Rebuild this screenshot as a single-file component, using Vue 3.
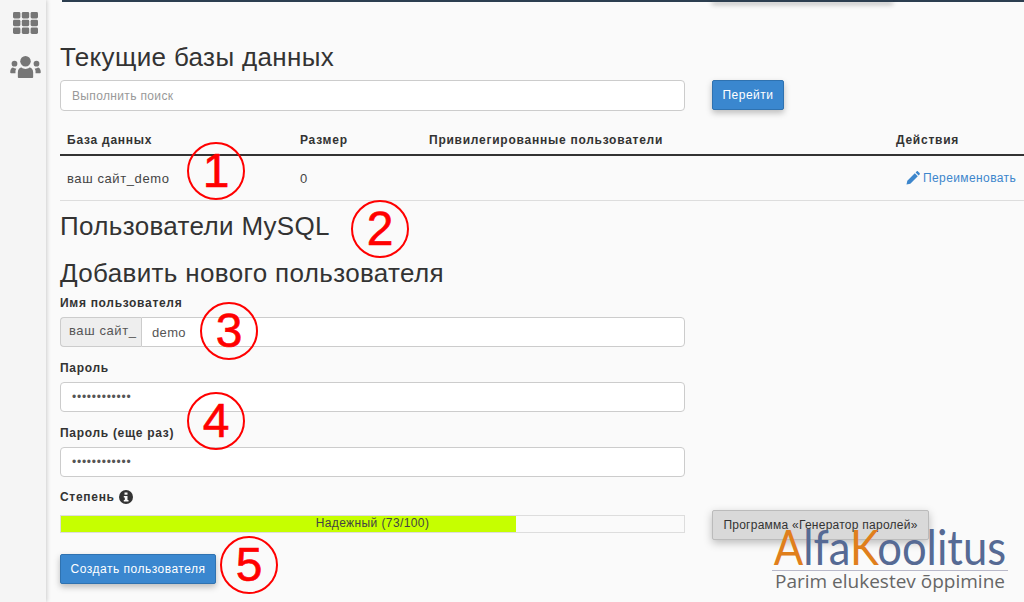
<template>
  <div class="page">
    <aside class="side">
      <svg class="ic-grid" width="26" height="24" viewBox="0 0 26 24">
        <g fill="#767676">
          <rect v-for="c in cells" :key="c.k" :x="c.x" :y="c.y" width="7.4" height="6.4" rx="1.4" />
        </g>
      </svg>
      <svg class="ic-users" width="31" height="22" viewBox="0 0 32 23">
        <g fill="#767676">
          <circle cx="16" cy="5.500" r="5.500" />
          <circle cx="4.500" cy="8" r="3" />
          <circle cx="27.500" cy="8" r="3" />
          <path d="M8 22v-5c0-3 2-5 4-5 1 1 2.500 1.500 4 1.500s3-.5 4-1.500c2 0 4 2 4 5v5c0 .8-.6 1-1 1H9c-.4 0-1-.2-1-1z" />
          <path d="M0 17c0-3 1.500-5 3-5 1 .8 2 1.200 3.500 1.200-.6.800-1 1.500-1 2.800v2H1c-.6 0-1-.4-1-1zM32 17c0-3-1.500-5-3-5-1 .8-2 1.200-3.500 1.200.6.800 1 1.500 1 2.800v2H31c.6 0 1-.4 1-1z" />
        </g>
      </svg>
    </aside>

    <main class="main">
      <div class="topbar"><div class="topshadow"></div></div>

      <h2 class="h-db">Текущие базы данных</h2>
      <div class="search-row">
        <input class="input" placeholder="Выполнить поиск" />
        <button class="btn primary go">Перейти</button>
      </div>

      <div class="table">
        <div class="tr head">
          <div class="c1">База данных</div>
          <div class="c2">Размер</div>
          <div class="c3">Привилегированные пользователи</div>
          <div class="c4">Действия</div>
        </div>
        <div class="tr body">
          <div class="c1">ваш сайт_demo</div>
          <div class="c2">0</div>
          <div class="c3"></div>
          <div class="c4 link">
            <svg width="14" height="14" viewBox="0 0 14 14"><path fill="#3d86cc" d="M0.500 13.500l.8-3.800 7.500-7.500 3 3-7.500 7.500zM9.600 1.400l1-1c.4-.4 1-.4 1.400 0l1.600 1.600c.4.400.4 1 0 1.400l-1 1z" /></svg>
            <span>Переименовать</span>
          </div>
        </div>
      </div>

      <h2 class="h-users">Пользователи MySQL</h2>
      <h2 class="h-add">Добавить нового пользователя</h2>

      <label class="lb first">Имя пользователя</label>
      <div class="input-group">
        <span class="addon">ваш сайт_</span>
        <input class="input grouped" value="demo" />
      </div>

      <label class="lb">Пароль</label>
      <input class="input pw" type="password" value="123456789012" />

      <label class="lb">Пароль (еще раз)</label>
      <input class="input pw" type="password" value="123456789012" />

      <label class="lb strength">Степень
        <svg class="info" width="14" height="14" viewBox="0 0 14 14">
          <circle cx="7" cy="7" r="7" fill="#333" />
          <rect x="5.500" y="2.500" width="3" height="2.200" fill="#fafafa" />
          <path d="M4.800 6h3.700v4h1v1.500H4.800V10h1V7.500h-1z" fill="#fafafa" />
        </svg>
      </label>
      <div class="meter-row">
        <div class="meter">
          <div class="fill" :style="{ width: strength + '%' }"></div>
          <div class="mtext">Надежный (73/100)</div>
        </div>
        <button class="btn gen">Программа «Генератор паролей»</button>
      </div>

      <button class="btn primary create">Создать пользователя</button>
    </main>

    <div v-for="m in marks" :key="m.n" class="mark" :style="{ left: m.x + 'px', top: m.y + 'px' }">{{ m.n }}</div>

    <div class="logo">
      <div class="logo-top"><div class="logo-word"><span class="or">A</span><span class="bl">lfa</span><span class="or">K</span><span class="bl">oolitus</span></div></div>
      <div class="logo-sub">Parim elukestev õppimine</div>
    </div>
  </div>
</template>

<script setup>
const strength = 73
const cells = []
for (let r = 0; r < 3; r++) {
  for (let c = 0; c < 3; c++) {
    cells.push({ k: r + '-' + c, x: c * 8.800, y: r * 7.800 })
  }
}
const marks = [
  { n: 1, x: 187, y: 142 },
  { n: 2, x: 351, y: 200 },
  { n: 3, x: 200, y: 302 },
  { n: 4, x: 187, y: 392 },
  { n: 5, x: 220, y: 536 }
]
</script>

<style>
html, body { margin: 0; padding: 0; background: #fafafa; overflow: hidden; }
</style>

<style scoped>
.page {
  position: relative;
  width: 1024px;
  height: 602px;
  overflow: hidden;
  display: flex;
  background: #fafafa;
  font-family: "Liberation Sans", Arial, sans-serif;
  color: #333;
}
.side {
  width: 46px;
  height: 602px;
  flex: none;
  background: #f5f5f5;
  box-shadow: 1px 0 4px rgba(0, 0, 0, 0.18);
  display: flex;
  flex-direction: column;
  align-items: center;
  padding: 12px 0 0 5px;
  box-sizing: border-box;
  z-index: 1;
}
.ic-users { margin-top: 20px; }
.main {
  flex: 1;
  padding-left: 14px;
  min-width: 0;
}
.topbar {
  height: 2px;
  margin-left: 2px;
  background: #2c3e50;
  position: relative;
}
.topshadow {
  position: absolute;
  left: 650px;
  top: 0;
  width: 181px;
  height: 2px;
  box-shadow: 0 2px 5px rgba(0, 0, 0, 0.45);
}
h2 {
  margin: 0;
  font-weight: 400;
  color: #333;
  white-space: nowrap;
  letter-spacing: 0.35px;
}
.h-db { font-size: 26px; line-height: 28px; margin-top: 41px; }
.search-row { display: flex; align-items: flex-start; margin-top: 9px; }
.input {
  display: block;
  width: 625px;
  height: 31px;
  box-sizing: border-box;
  border: 1px solid #ccc;
  border-radius: 4px;
  background: #fff;
  padding: 0 11px;
  font: 12px "Liberation Sans", Arial, sans-serif;
  letter-spacing: 0.35px;
  color: #555;
  outline: none;
}
.input::placeholder { color: #999; opacity: 1; }
.btn {
  display: block;
  box-sizing: border-box;
  height: 30px;
  border-radius: 2px;
  font: 12px "Liberation Sans", Arial, sans-serif;
  letter-spacing: 0.5px;
  white-space: nowrap;
  padding: 0;
}
.primary {
  background: #3a87cf;
  border: 1px solid #2f72b0;
  color: #fff;
  box-shadow: 0 3px 6px rgba(0, 0, 0, 0.25);
}
.go { width: 72px; margin-left: 27px; }
.table { margin-top: 14px; }
.tr { display: flex; align-items: center; font-size: 12px; letter-spacing: 0.75px; }
.head {
  height: 31px;
  font-weight: 700;
  border-bottom: 2px solid #333;
  box-sizing: border-box;
}
.body { height: 45px; border-bottom: 1px solid #ddd; box-sizing: border-box; color: #444; font-size: 13px; letter-spacing: 0.6px; }
.c1 { width: 240px; padding-left: 7px; box-sizing: border-box; flex: none; }
.c2 { width: 129px; flex: none; }
.c3 { width: 467px; flex: none; }
.c4 { flex: 1; white-space: nowrap; }
.link { color: #3d86cc; display: flex; align-items: center; gap: 3px; margin-left: 10px; font-size: 12px; letter-spacing: 0.4px; }
.h-users { font-size: 26px; line-height: 28px; margin-top: 11px; }
.h-add { font-size: 26px; line-height: 28px; margin-top: 19px; }
.lb {
  display: block;
  font-size: 12px;
  font-weight: 700;
  line-height: 14px;
  letter-spacing: 0.7px;
  margin-top: 14px;
  margin-bottom: 7px;
}
.lb.first { margin-top: 9px; }
.input-group { display: flex; width: 625px; }
.addon {
  box-sizing: border-box;
  width: 81px;
  height: 30px;
  background: #eee;
  border: 1px solid #ccc;
  border-right: none;
  border-radius: 4px 0 0 4px;
  font-size: 13px;
  letter-spacing: 0.6px;
  line-height: 26px;
  padding-left: 8px;
  color: #555;
  white-space: nowrap;
}
.grouped { width: 544px; height: 30px; border-radius: 0 4px 4px 0; padding-left: 10px; font-size: 13px; }
.pw { height: 30px; letter-spacing: 0.75px; }
.strength { display: flex; align-items: center; gap: 4px; margin-top: 13px; margin-bottom: 11px; }
.meter-row { display: flex; align-items: flex-start; }
.meter {
  position: relative;
  width: 625px;
  height: 18px;
  box-sizing: border-box;
  border: 1px solid #ddd;
  background: #fafafa;
  flex: none;
}
.fill { position: absolute; left: 0; top: 0; bottom: 0; background: #c6ff00; }
.mtext { position: relative; text-align: center; font-size: 12px; line-height: 15px; letter-spacing: 0.4px; color: #444; }
.gen {
  margin-left: 27px;
  margin-top: -5px;
  width: 217px;
  background: #d9d9d9;
  border: 1px solid #bbb;
  color: #333;
  letter-spacing: 0.25px;
  box-shadow: 0 3px 8px rgba(0, 0, 0, 0.25);
}
.create { width: 156px; margin-top: 14px; }
.mark {
  position: absolute;
  width: 58px;
  height: 58px;
  box-sizing: border-box;
  border: 2px solid #f00;
  border-radius: 50%;
  color: #f00;
  font-size: 48px;
  line-height: 54px;
  text-align: center;
  -webkit-text-stroke: 0.6px #f00;
  z-index: 3;
}
.logo {
  position: absolute;
  left: 772px;
  top: 522px;
  width: 236px;
  z-index: 4;
  font-family: "Open Sans", sans-serif;
}
.logo-top {
  height: 48px;
  border-bottom: 1px solid #b9b9c9;
}
.logo-word {
  font-family: "Lato", sans-serif;
  font-weight: 400;
  font-size: 49px;
  line-height: 48px;
  white-space: nowrap;
  padding-left: 2px;
  transform: scaleX(0.89);
  transform-origin: left top;
}
.or { color: #e07f1c; }
.bl { color: #566a94; }
.logo-sub { font-size: 19px; line-height: 21px; color: #666; padding-left: 3px; white-space: nowrap; }
</style>
